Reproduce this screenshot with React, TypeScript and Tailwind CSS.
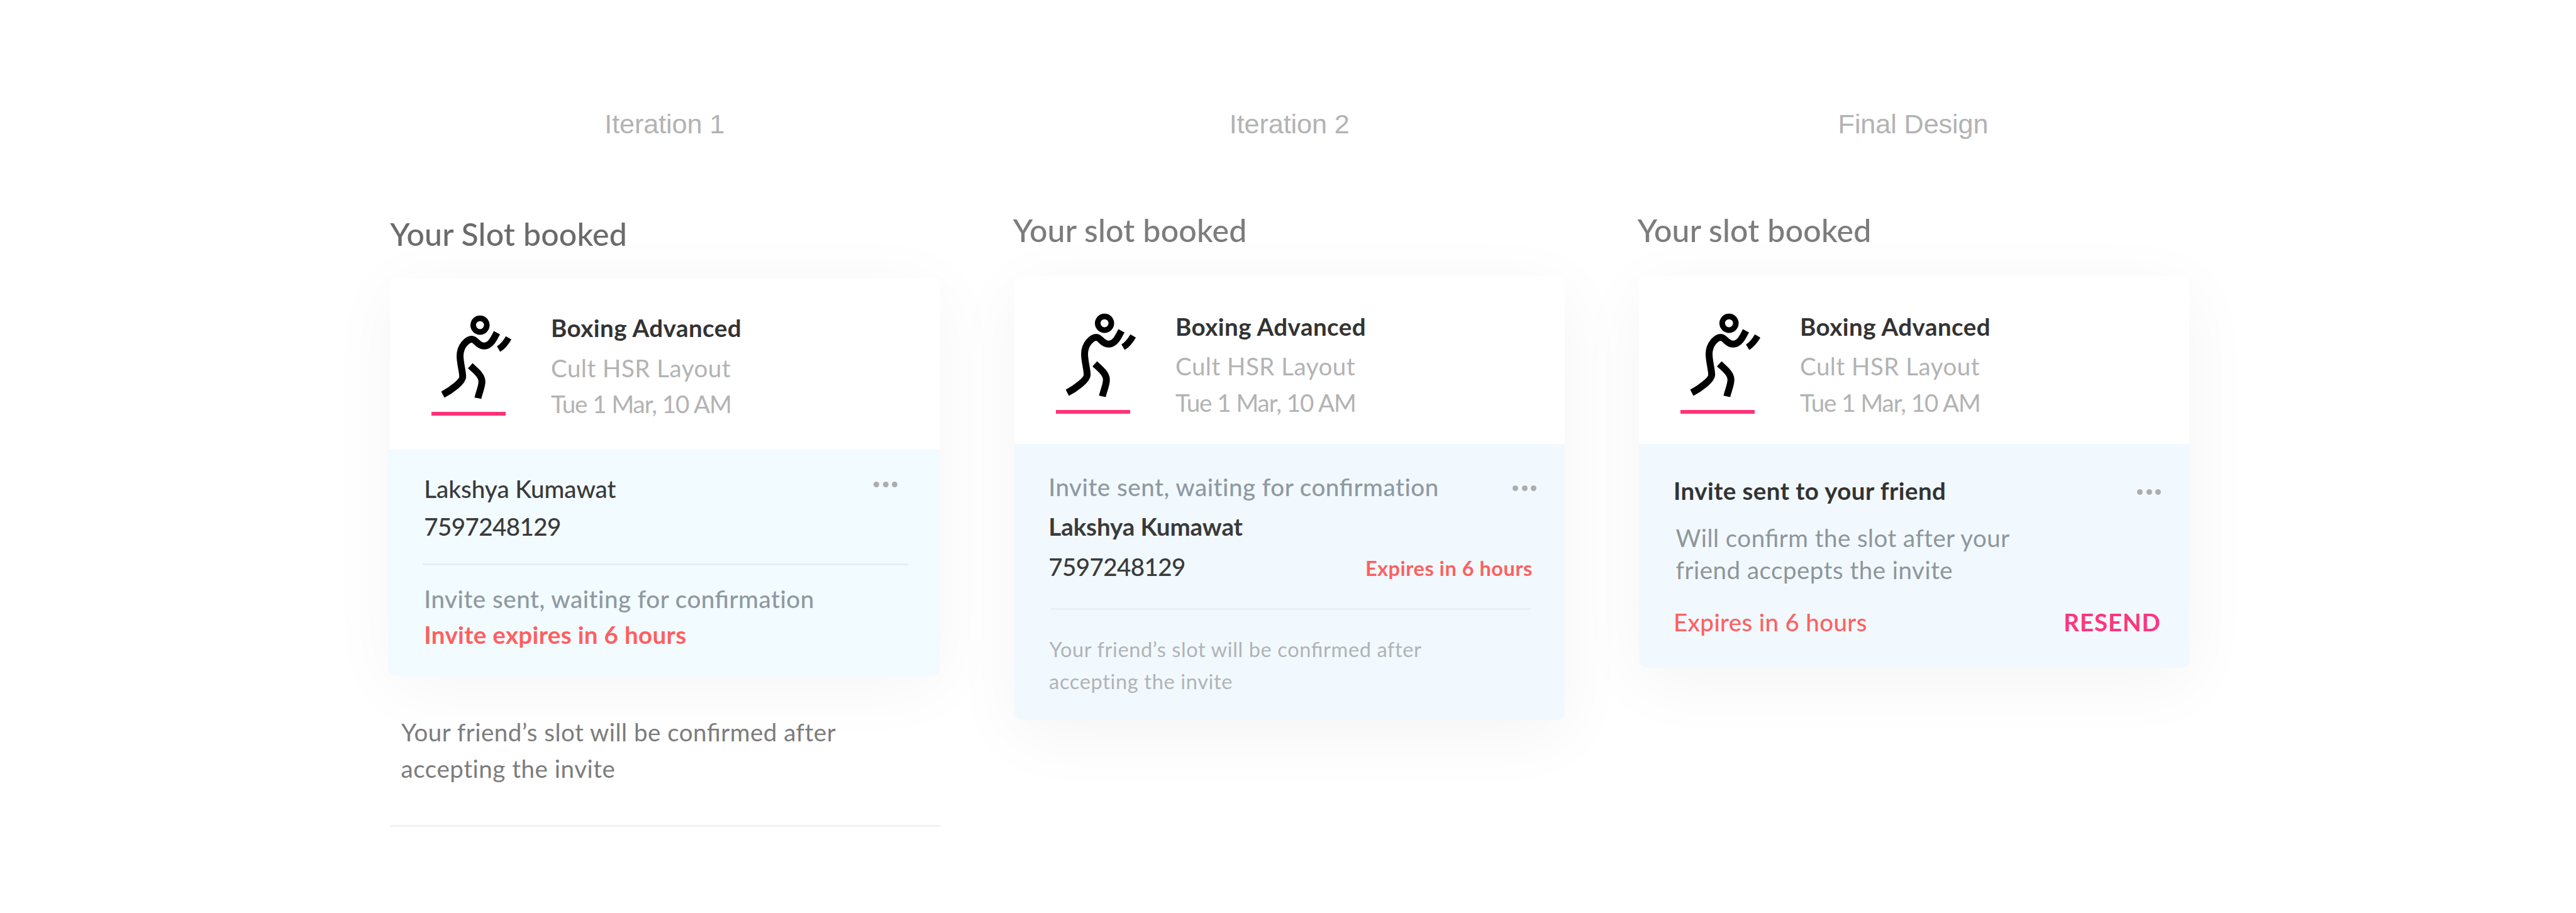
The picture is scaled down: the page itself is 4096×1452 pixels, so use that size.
import type { ReactNode } from 'react';
import clsx from 'clsx';

function Line({ className, children }: { className?: string; children: ReactNode }) {
  return <p className={clsx('whitespace-nowrap', className)}>{children}</p>;
}

/* Keeps the joined "fi" in tracked text */
function Joined({ children }: { children: ReactNode }) {
  return <span className="[font-feature-settings:'liga']">{children}</span>;
}

/* Type styles shared by the three cards */
const body = 'text-[38.6px] leading-[40px]';
const small = 'text-[32.6px] leading-[33px]';
const heading = 'text-[50.1px] font-medium leading-[50px] tracking-[0.15px]';

function Dots({ className }: { className: string }) {
  return (
    <div className={clsx('ml-auto flex gap-[5.6px]', className)}>
      <span className="size-[9px] rounded-full bg-[#adadad]" />
      <span className="size-[9px] rounded-full bg-[#adadad]" />
      <span className="size-[9px] rounded-full bg-[#adadad]" />
    </div>
  );
}

function Boxer() {
  return (
    <svg viewBox="120 70 360 420" className="ml-[12.4px] h-[133.9px] w-[114.8px]" fill="none" stroke="#000" strokeWidth="34.5">
      <circle cx="321.5" cy="120.5" r="34" strokeWidth="28" />
      <path d="M406 158C392 184 376 224.500 342 224.500C308 224.500 302 190.500 281 190.500C260 190.500 222 222 222 275C222 310 235 350 235 378C235 402 180 444 136 467" />
      <path d="M464 184C451 207 436 227 414 240" strokeWidth="31.5" />
      <path d="M273 323C300 348 331 372 331 402C331 430 317 455 311 485" />
    </svg>
  );
}

function Summary({ className }: { className: string }) {
  return (
    <div className={clsx('flex rounded-t-[11px] bg-white pl-[65.9px]', className)}>
      <div className="w-[127.2px] pt-[59.1px]">
        <Boxer />
        <div className="mt-5 h-[6px] w-[118px] bg-[#ff3278]" />
      </div>
      <div className={clsx('ml-[62.6px] pt-[59.9px]', body)}>
        <Line className="font-bold tracking-[0.42px] text-[#333333]">Boxing Advanced</Line>
        <Line className="mt-[23.2px] tracking-[0.45px] text-[#b3b3b3]">Cult HSR Layout</Line>
        <Line className="mt-[17.5px] tracking-[-1.05px] text-[#b3b3b3]">Tue 1 Mar, 10 AM</Line>
      </div>
    </div>
  );
}

function Label({ className, children }: { className: string; children: ReactNode }) {
  return (
    <h2
      className={clsx(
        "whitespace-nowrap font-['Liberation_Sans',sans-serif] text-[43.3px] leading-[48px] tracking-[-0.15px] text-[#b3b3b3]",
        className,
      )}
    >
      {children}
    </h2>
  );
}

function IterationOne() {
  return (
    <section className="w-[875px]">
      <Label className="pl-[341px]">Iteration 1</Label>
      <Line className={clsx('mt-[126px] text-[#6b6b6b]', heading)}>Your Slot booked</Line>
      <div className="mt-[44.6px] rounded-[11px] shadow-[0_17px_110px_rgba(0,0,0,0.043)]">
        <Summary className="h-[273px]" />
        <div className={clsx('-ml-[3px] h-[359px] rounded-b-[11px] bg-[#f2fbff] pl-[57px] pt-[42.5px]', body)}>
          <div className="flex h-10 items-start">
            <Line className="font-medium tracking-[-0.06px] text-[#3a3a3a]">Lakshya Kumawat</Line>
            <Dots className="mr-[68px] mt-[8.7px]" />
          </div>
          <Line className="mt-5 font-medium tracking-[-0.62px] text-[#3a3a3a]">7597248129</Line>
          <div className="-ml-[2.5px] mt-[38.5px] h-[3px] w-[772px] bg-[#e6eff8]" />
          <Line className="mt-[33.6px] font-medium tracking-[0.49px] text-[#8f99a1]">
            Invite sent, waiting for <Joined>confirm</Joined>ation
          </Line>
          <Line className="mt-[17.2px] font-bold tracking-[0.31px] text-[#ff5f5f]">Invite expires in 6 hours</Line>
        </div>
      </div>
      <div className={clsx('mt-[70.9px] pl-[17.8px] text-[#7c7c7c]', body)}>
        <Line className="tracking-[0.47px]">
          Your friend’s slot will be <Joined>confirm</Joined>ed after
        </Line>
        <Line className="-ml-[0.5px] mt-[17.5px] tracking-[0.5px]">accepting the invite</Line>
      </div>
      <div className="mt-[69.7px] h-[3px] w-[876px] bg-[#f2f2f2]" />
    </section>
  );
}

function IterationTwo() {
  return (
    <section className="w-[875px]">
      <Label className="pl-[341.5px]">Iteration 2</Label>
      <Line className={clsx('-ml-[2.5px] mt-[119.8px] text-[#7c7c7c]', heading)}>Your slot booked</Line>
      <div className="mt-[48.2px] rounded-[11px] shadow-[0_23px_110px_rgba(0,0,0,0.047)]">
        <Summary className="h-[267px]" />
        <div className={clsx('h-[439.4px] rounded-b-[11px] bg-[#f1f9ff] pl-[54px] pt-[48.5px]', body)}>
          <div className="flex h-10 items-start">
            <Line className="font-medium tracking-[0.49px] text-[#8f99a1]">
              Invite sent, waiting for <Joined>confirm</Joined>ation
            </Line>
            <Dots className="mr-[45px] mt-[17.5px]" />
          </div>
          <Line className="mt-[22.8px] font-bold tracking-[-0.14px] text-[#3a3a3a]">Lakshya Kumawat</Line>
          <div className="mt-[23.3px] flex h-10 items-baseline">
            <Line className="font-medium tracking-[-0.62px] text-[#3a3a3a]">7597248129</Line>
            <Line className={clsx('ml-auto mr-[51.5px] font-bold tracking-[0.49px] text-[#ff5f5f]', small)}>Expires in 6 hours</Line>
          </div>
          <div className="ml-[3.5px] mt-[46.8px] h-[3px] w-[764px] bg-[#e7f0f9]" />
          <div className={clsx('ml-[1.3px] mt-[45.4px] text-[#b1b3b4]', small)}>
            <Line className="tracking-[0.6px]">
              Your friend’s slot will be <Joined>confirm</Joined>ed after
            </Line>
            <Line className="-ml-[0.5px] mt-[18.5px] tracking-[0.63px]">accepting the invite</Line>
          </div>
        </div>
      </div>
    </section>
  );
}

function FinalDesign() {
  return (
    <section className="w-[875px]">
      <Label className="pl-[316.3px]">Final Design</Label>
      <Line className={clsx('-ml-[2.5px] mt-[119.8px] text-[#7c7c7c]', heading)}>Your slot booked</Line>
      <div className="mt-[48.2px] rounded-[11px] shadow-[0_23px_110px_rgba(0,0,0,0.047)]">
        <Summary className="h-[267px]" />
        <div className={clsx('h-[355.6px] rounded-b-[11px] bg-[#f1f9ff] pl-[54.7px] pt-[54px]', body)}>
          <div className="flex h-10 items-start">
            <Line className="font-bold tracking-[0.39px] text-[#333333]">Invite sent to your friend</Line>
            <Dots className="mr-[45px] mt-[17.6px]" />
          </div>
          <div className="ml-[3.6px] mt-[34.9px] text-[#8f9699]">
            <Line className="tracking-[0.42px]">
              Will <Joined>confirm</Joined> the slot after your
            </Line>
            <Line className="mt-[11.5px] tracking-[0.45px]">friend accpepts the invite</Line>
          </div>
          <div className="mt-[43px] flex">
            <Line className="font-medium tracking-[0.33px] text-[#ff615f]">Expires in 6 hours</Line>
            <Line className="ml-auto mr-[45.5px] font-bold tracking-[0.85px] text-[#ff357b]">RESEND</Line>
          </div>
        </div>
      </div>
    </section>
  );
}

export default function App() {
  return (
    <main className="flex h-[1452px] w-[4096px] gap-[118px] overflow-hidden bg-white pl-[620.3px] pt-[173px] font-['Lato',sans-serif]">
      <IterationOne />
      <IterationTwo />
      <FinalDesign />
    </main>
  );
}
